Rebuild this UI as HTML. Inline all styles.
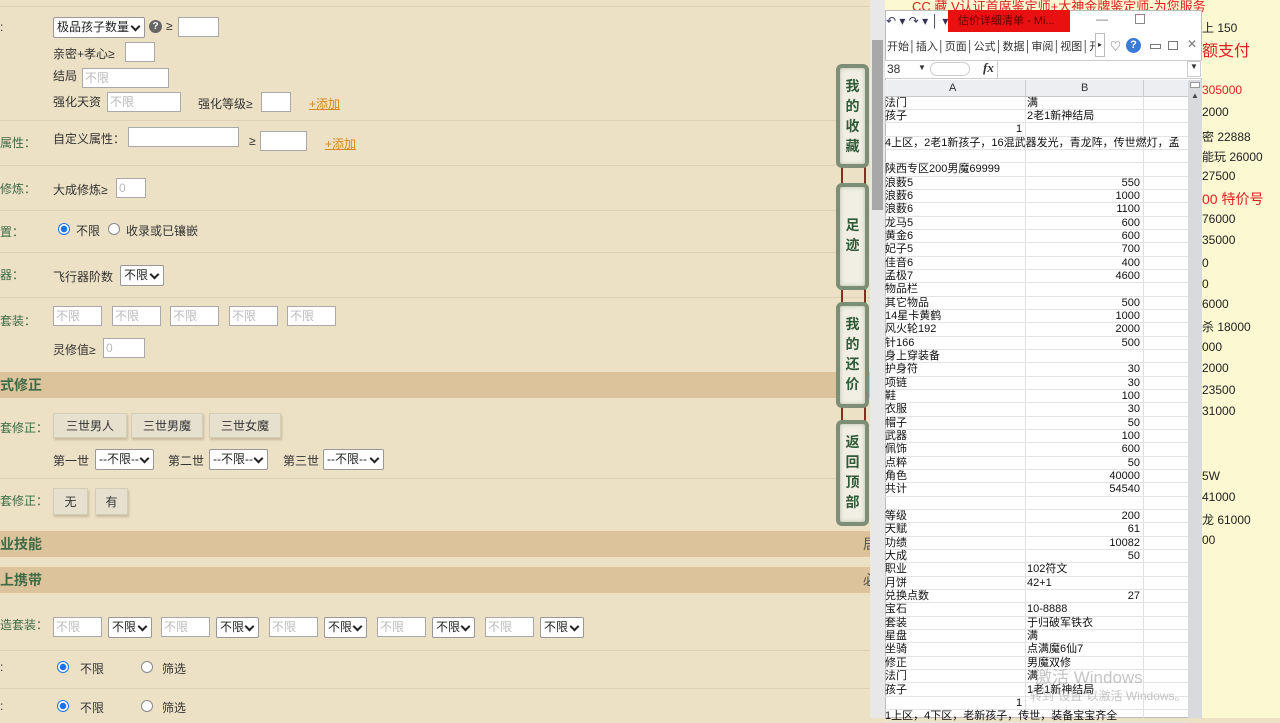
<!DOCTYPE html>
<html><head><meta charset="utf-8"><style>
*{margin:0;padding:0;box-sizing:border-box}
body{width:1280px;height:718px;overflow:hidden;position:relative;background:#ece0c5;font-family:"Liberation Sans","Noto Sans CJK SC",sans-serif;font-size:12px;color:#333}
.a{position:absolute;white-space:nowrap}
.lbl{color:#3d6b45}
.in{position:absolute;background:#fff;border:1px solid #a9a9a9;height:20px;color:#bbb;font-size:12px;padding:2px 2px;line-height:14px}
.sel{position:absolute;background:#fff;border:1px solid #999;border-radius:2px;height:21px;font-size:12px;color:#222;padding:2px 3px;line-height:15px;overflow:hidden}
.sel:after{content:"";position:absolute;right:5px;top:5px;width:5px;height:5px;border-right:2px solid #222;border-bottom:2px solid #222;transform:rotate(45deg);background:#fff}
.hr{position:absolute;left:0;width:870px;height:1px;background:#dfd1b4}
.bar{position:absolute;left:0;width:870px;height:26px;background:#dcc39b;font-weight:bold;color:#3d6b45;font-size:14px;line-height:26px}
.btn{position:absolute;background:#e6e1cf;border:1px solid #d5cdb5;box-shadow:1px 2px 2px #c9bb9c;text-align:center;line-height:24px;font-size:12px;color:#333}
.radio{position:absolute;width:12px;height:12px;border-radius:50%;border:1px solid #888;background:#fff}
.radio.on{border:1px solid #1a73e8;background:radial-gradient(circle,#1a73e8 3px,#fff 3.5px)}
.add{position:absolute;color:#d48a1a;text-decoration:underline}
.vb{position:absolute;left:836px;width:33px;border:4px solid #7d8e76;border-radius:6px;background:#f1efe4;box-shadow:inset 0 0 4px #b5b9a8;color:#2f5a37;font-weight:bold;font-size:14px;text-align:center;line-height:20px;padding-top:8px}
.rope{position:absolute;width:2px;background:#8b2b22}
.xl{position:absolute;left:885px;width:317px;background:#fff}
.row{position:absolute;left:885px;width:303px;height:13.34px;border-bottom:1px solid #e3e3e3;font-size:11px;line-height:13px;color:#111}
.row .c1{position:absolute;left:0}
.row .c2{position:absolute;left:142px}
.row .c3{position:absolute;right:48px}
.yt{position:absolute;left:1202px;font-size:12px;color:#222;white-space:nowrap}
.r{color:#e02020}
</style></head><body>

<div class="hr" style="top:6px"></div>
<div class="a" style="left:0;top:20px">:</div>
<div class="sel" style="left:53px;top:17px;width:92px">极品孩子数量</div>
<div class="a" style="left:149px;top:20px;width:13px;height:13px;border-radius:50%;background:#666;color:#fff;font-size:10px;text-align:center;line-height:13px;font-weight:bold">?</div>
<div class="a" style="left:166px;top:19px">≥</div>
<div class="in" style="left:178px;top:17px;width:41px"></div>
<div class="a" style="left:53px;top:45px">亲密+孝心≥</div>
<div class="in" style="left:125px;top:42px;width:30px"></div>
<div class="a" style="left:53px;top:67px">结局</div>
<div class="in" style="left:82px;top:68px;width:87px">不限</div>
<div class="a" style="left:53px;top:93px">强化天资</div>
<div class="in" style="left:107px;top:92px;width:74px">不限</div>
<div class="a" style="left:198px;top:95px">强化等级≥</div>
<div class="in" style="left:261px;top:92px;width:30px"></div>
<div class="add" style="left:309px;top:95px">+添加</div>
<div class="hr" style="top:120px"></div>
<div class="a lbl" style="left:0;top:134px">属性：</div>
<div class="a" style="left:53px;top:130px">自定义属性：</div>
<div class="in" style="left:128px;top:127px;width:111px"></div>
<div class="a" style="left:249px;top:134px">≥</div>
<div class="in" style="left:260px;top:131px;width:47px"></div>
<div class="add" style="left:325px;top:135px">+添加</div>
<div class="hr" style="top:165px"></div>
<div class="a lbl" style="left:0;top:180px">修炼：</div>
<div class="a" style="left:53px;top:181px">大成修炼≥</div>
<div class="in" style="left:116px;top:178px;width:30px">0</div>
<div class="hr" style="top:210px"></div>
<div class="a lbl" style="left:0;top:223px">置：</div>
<div class="radio on" style="left:58px;top:223px"></div>
<div class="a" style="left:76px;top:222px">不限</div>
<div class="radio" style="left:108px;top:223px"></div>
<div class="a" style="left:126px;top:222px">收录或已镶嵌</div>
<div class="hr" style="top:252px"></div>
<div class="a lbl" style="left:0;top:266px">器：</div>
<div class="a" style="left:53px;top:268px">飞行器阶数</div>
<div class="sel" style="left:120px;top:265px;width:44px">不限</div>
<div class="hr" style="top:297px"></div>
<div class="a lbl" style="left:0;top:312px">套装：</div>
<div class="in" style="left:53px;top:306px;width:49px">不限</div>
<div class="in" style="left:112px;top:306px;width:49px">不限</div>
<div class="in" style="left:170px;top:306px;width:49px">不限</div>
<div class="in" style="left:229px;top:306px;width:49px">不限</div>
<div class="in" style="left:287px;top:306px;width:49px">不限</div>
<div class="a" style="left:53px;top:341px">灵修值≥</div>
<div class="in" style="left:103px;top:338px;width:42px">0</div>

<div class="bar" style="top:372px">式修正</div>
<div class="a lbl" style="left:0;top:419px">套修正：</div>
<div class="btn" style="left:53px;top:413px;width:74px;height:25px">三世男人</div>
<div class="btn" style="left:131px;top:413px;width:72px;height:25px">三世男魔</div>
<div class="btn" style="left:209px;top:413px;width:72px;height:25px">三世女魔</div>
<div class="a" style="left:53px;top:452px">第一世</div>
<div class="sel" style="left:95px;top:449px;width:59px">--不限--</div>
<div class="a" style="left:168px;top:452px">第二世</div>
<div class="sel" style="left:209px;top:449px;width:59px">--不限--</div>
<div class="a" style="left:283px;top:452px">第三世</div>
<div class="sel" style="left:323px;top:449px;width:61px">--不限--</div>
<div class="hr" style="top:478px"></div>
<div class="a lbl" style="left:0;top:492px">套修正：</div>
<div class="btn" style="left:53px;top:488px;width:35px;height:27px;line-height:27px">无</div>
<div class="btn" style="left:95px;top:488px;width:33px;height:27px;line-height:27px">有</div>

<div class="bar" style="top:531px">业技能<span class="a" style="left:863px;top:0;font-weight:normal;color:#555">居</span></div>
<div class="bar" style="top:567px">上携带<span class="a" style="left:863px;top:0;font-weight:normal;color:#555">必</span></div>
<div class="a lbl" style="left:0;top:616px">造套装：</div>
<div class="in" style="left:53px;top:617px;width:49px">不限</div><div class="sel" style="left:108px;top:617px;width:44px">不限</div>
<div class="in" style="left:161px;top:617px;width:49px">不限</div><div class="sel" style="left:216px;top:617px;width:43px">不限</div>
<div class="in" style="left:269px;top:617px;width:49px">不限</div><div class="sel" style="left:324px;top:617px;width:43px">不限</div>
<div class="in" style="left:377px;top:617px;width:49px">不限</div><div class="sel" style="left:432px;top:617px;width:43px">不限</div>
<div class="in" style="left:485px;top:617px;width:49px">不限</div><div class="sel" style="left:540px;top:617px;width:44px">不限</div>
<div class="hr" style="top:650px"></div>
<div class="a" style="left:0;top:660px">:</div>
<div class="radio on" style="left:57px;top:661px"></div><div class="a" style="left:80px;top:660px">不限</div>
<div class="radio" style="left:141px;top:661px"></div><div class="a" style="left:162px;top:660px">筛选</div>
<div class="hr" style="top:688px"></div>
<div class="a" style="left:0;top:699px">:</div>
<div class="radio on" style="left:57px;top:700px"></div><div class="a" style="left:80px;top:699px">不限</div>
<div class="radio" style="left:141px;top:700px"></div><div class="a" style="left:162px;top:699px">筛选</div>

<div class="rope" style="left:841px;top:160px;height:270px"></div>
<div class="rope" style="left:864px;top:160px;height:270px"></div>
<div class="vb" style="top:64px;height:104px">我<br>的<br>收<br>藏</div>
<div class="vb" style="top:183px;height:107px;padding-top:28px">足<br>迹</div>
<div class="vb" style="top:302px;height:106px">我<br>的<br>还<br>价</div>
<div class="vb" style="top:420px;height:106px">返<br>回<br>顶<br>部</div>

<div class="a" style="left:870px;top:0;width:15px;height:718px;background:#e8e8e8"></div>
<div class="a" style="left:872px;top:40px;width:11px;height:170px;background:#a8a8a8"></div>

<div class="a" style="left:885px;top:0;width:395px;height:718px;background:#fbf8d2"></div>
<div class="a r" style="left:912px;top:-4px;font-size:13px">CC 藏 V认证首席鉴定师+大神金牌鉴定师-为您服务</div>
<div class="yt" style="top:19px">上 150</div>
<div class="yt r" style="top:37px;font-size:16px">额支付</div>
<div class="yt r" style="top:83px">305000</div>
<div class="yt" style="top:105px">2000</div>
<div class="yt" style="top:128px">密 22888</div>
<div class="yt" style="top:148px">能玩 26000</div>
<div class="yt" style="top:169px">27500</div>
<div class="yt r" style="top:189px;font-size:14px">00 特价号</div>
<div class="yt" style="top:212px">76000</div>
<div class="yt" style="top:233px">35000</div>
<div class="yt" style="top:256px">0</div>
<div class="yt" style="top:277px">0</div>
<div class="yt" style="top:297px">6000</div>
<div class="yt" style="top:318px">杀 18000</div>
<div class="yt" style="top:340px">000</div>
<div class="yt" style="top:361px">2000</div>
<div class="yt" style="top:383px">23500</div>
<div class="yt" style="top:404px">31000</div>
<div class="yt" style="top:469px">5W</div>
<div class="yt" style="top:490px">41000</div>
<div class="yt" style="top:511px">龙 61000</div>
<div class="yt" style="top:533px">00</div>

<div class="xl" style="top:10px;height:708px;border:1px solid #bbb"></div>
<div class="a" style="left:886px;top:14px;font-size:12px;color:#335">↶ ▾ ↷ ▾ │ ▾</div>
<div class="a" style="left:948px;top:10px;width:122px;height:22px;background:#e81010;color:#600;font-size:11px;line-height:22px;padding-left:10px">估价详细清单 - Mi...</div>
<div class="a" style="left:1096px;top:12px;color:#777">—</div>
<div class="a" style="left:1135px;top:14px;width:10px;height:10px;border:1px solid #888"></div>
<div class="a" style="left:887px;top:38px;font-size:11px;color:#333;word-spacing:3px">开始│插入│页面│公式│数据│审阅│视图│开</div>
<div class="a" style="left:1095px;top:33px;width:10px;height:24px;border:1px solid #bbb;background:#fff;font-size:8px;text-align:center;line-height:22px">▸</div>
<div class="a" style="left:1110px;top:38px;color:#666;font-size:11px">♡</div>
<div class="a" style="left:1126px;top:38px;width:15px;height:15px;border-radius:50%;background:#3a7ad8;color:#fff;font-weight:bold;font-size:11px;text-align:center;line-height:15px">?</div>
<div class="a" style="left:1150px;top:44px;width:11px;height:5px;border:1px solid #777"></div>
<div class="a" style="left:1168px;top:41px;width:10px;height:9px;border:1px solid #777"></div>
<div class="a" style="left:1187px;top:37px;color:#777;font-size:12px">✕</div>
<div class="a" style="left:885px;top:60px;width:317px;height:19px;border-top:1px solid #ccc;border-bottom:1px solid #ccc;background:#fff"></div>
<div class="a" style="left:887px;top:62px;font-size:12px">38</div>
<div class="a" style="left:918px;top:63px;font-size:8px">▼</div>
<div class="a" style="left:930px;top:62px;width:40px;height:14px;border:1px solid #ccc;border-radius:7px"></div>
<div class="a" style="left:983px;top:60px;font-style:italic;font-family:'Liberation Serif',serif;font-size:13px;font-weight:bold">fx</div>
<div class="a" style="left:997px;top:60px;width:1px;height:19px;background:#ccc"></div>
<div class="a" style="left:1187px;top:61px;width:14px;height:16px;border:1px solid #ccc;font-size:8px;text-align:center">▼</div>
<div class="a" style="left:885px;top:80px;width:303px;height:17px;background:#eceef1;border-bottom:1px solid #c8c8c8;font-size:11px;color:#333">
  <span class="a" style="left:64px;top:2px">A</span>
  <span class="a" style="left:140px;top:0;width:1px;height:16px;background:#ccc"></span>
  <span class="a" style="left:196px;top:2px">B</span>
  <span class="a" style="left:258px;top:0;width:1px;height:16px;background:#ccc"></span>
</div>
<div class="a" style="left:1025px;top:97px;width:1px;height:621px;background:#e0e0e0"></div>
<div class="a" style="left:1143px;top:97px;width:1px;height:621px;background:#e0e0e0"></div>
<div class="a" style="left:1188px;top:80px;width:14px;height:638px;background:#d8dadd"></div>
<div class="a" style="left:1190px;top:82px;width:10px;height:6px;border:1px solid #999;background:#fff"></div>
<div class="a" style="left:1191px;top:91px;font-size:8px;color:#444">▲</div>

<div class="row" style="top:96.5px"><span class="c1">法门</span><span class="c2">满</span></div>
<div class="row" style="top:109.8px"><span class="c1">孩子</span><span class="c2">2老1新神结局</span></div>
<div class="row" style="top:123.2px"><span class="c1" style="left:131px">1</span></div>
<div class="row" style="top:136.5px"><span class="c1">4上区，2老1新孩子，16混武器发光，青龙阵，传世燃灯，孟</span></div>
<div class="row" style="top:149.9px"></div>
<div class="row" style="top:163.2px"><span class="c1">陕西专区200男魔69999</span></div>
<div class="row" style="top:176.5px"><span class="c1">浪薮5</span><span class="c3">550</span></div>
<div class="row" style="top:189.9px"><span class="c1">浪薮6</span><span class="c3">1000</span></div>
<div class="row" style="top:203.2px"><span class="c1">浪薮6</span><span class="c3">1100</span></div>
<div class="row" style="top:216.6px"><span class="c1">龙马5</span><span class="c3">600</span></div>
<div class="row" style="top:229.9px"><span class="c1">黄金6</span><span class="c3">600</span></div>
<div class="row" style="top:243.2px"><span class="c1">妃子5</span><span class="c3">700</span></div>
<div class="row" style="top:256.6px"><span class="c1">佳音6</span><span class="c3">400</span></div>
<div class="row" style="top:269.9px"><span class="c1">孟极7</span><span class="c3">4600</span></div>
<div class="row" style="top:283.3px"><span class="c1">物品栏</span></div>
<div class="row" style="top:296.6px"><span class="c1">其它物品</span><span class="c3">500</span></div>
<div class="row" style="top:309.9px"><span class="c1">14星卡黄鹤</span><span class="c3">1000</span></div>
<div class="row" style="top:323.3px"><span class="c1">风火轮192</span><span class="c3">2000</span></div>
<div class="row" style="top:336.6px"><span class="c1">针166</span><span class="c3">500</span></div>
<div class="row" style="top:350px"><span class="c1">身上穿装备</span></div>
<div class="row" style="top:363.3px"><span class="c1">护身符</span><span class="c3">30</span></div>
<div class="row" style="top:376.6px"><span class="c1">项链</span><span class="c3">30</span></div>
<div class="row" style="top:390px"><span class="c1">鞋</span><span class="c3">100</span></div>
<div class="row" style="top:403.3px"><span class="c1">衣服</span><span class="c3">30</span></div>
<div class="row" style="top:416.7px"><span class="c1">帽子</span><span class="c3">50</span></div>
<div class="row" style="top:430px"><span class="c1">武器</span><span class="c3">100</span></div>
<div class="row" style="top:443.3px"><span class="c1">佩饰</span><span class="c3">600</span></div>
<div class="row" style="top:456.7px"><span class="c1">点粹</span><span class="c3">50</span></div>
<div class="row" style="top:470px"><span class="c1">角色</span><span class="c3">40000</span></div>
<div class="row" style="top:483.4px"><span class="c1">共计</span><span class="c3">54540</span></div>
<div class="row" style="top:496.7px"></div>
<div class="row" style="top:510px"><span class="c1">等级</span><span class="c3">200</span></div>
<div class="row" style="top:523.4px"><span class="c1">天赋</span><span class="c3">61</span></div>
<div class="row" style="top:536.7px"><span class="c1">功绩</span><span class="c3">10082</span></div>
<div class="row" style="top:550.1px"><span class="c1">大成</span><span class="c3">50</span></div>
<div class="row" style="top:563.4px"><span class="c1">职业</span><span class="c2">102符文</span></div>
<div class="row" style="top:576.7px"><span class="c1">月饼</span><span class="c2">42+1</span></div>
<div class="row" style="top:590.1px"><span class="c1">兑换点数</span><span class="c3">27</span></div>
<div class="row" style="top:603.4px"><span class="c1">宝石</span><span class="c2">10-8888</span></div>
<div class="row" style="top:616.8px"><span class="c1">套装</span><span class="c2">于归破军铁衣</span></div>
<div class="row" style="top:630.1px"><span class="c1">星盘</span><span class="c2">满</span></div>
<div class="row" style="top:643.4px"><span class="c1">坐骑</span><span class="c2">点满魔6仙7</span></div>
<div class="row" style="top:656.8px"><span class="c1">修正</span><span class="c2">男魔双修</span></div>
<div class="row" style="top:670.1px"><span class="c1">法门</span><span class="c2">满</span></div>
<div class="row" style="top:683.5px"><span class="c1">孩子</span><span class="c2">1老1新神结局</span></div>
<div class="row" style="top:696.8px"><span class="c1" style="left:131px">1</span></div>
<div class="row" style="top:710.1px"><span class="c1">1上区，4下区，老新孩子，传世，装备宝宝齐全</span></div>
<div class="a" style="left:1035px;top:663px;font-size:17px;color:rgba(150,150,150,.55)">激活 Windows</div>
<div class="a" style="left:1030px;top:687px;font-size:12px;color:rgba(150,150,150,.55)">转到"设置"以激活 Windows。</div>
</body></html>
